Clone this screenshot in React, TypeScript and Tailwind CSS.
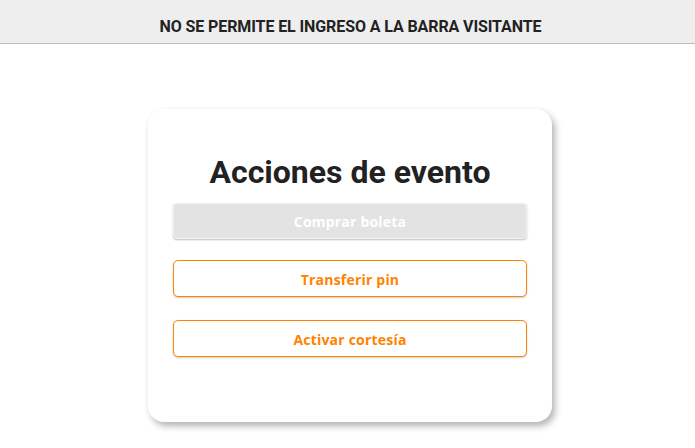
import React from 'react';

const actions = [
  { label: 'Comprar boleta', disabled: true },
  { label: 'Transferir pin', disabled: false },
  { label: 'Activar cortesía', disabled: false },
];

export default function App() {
  return (
    <div className="min-h-screen bg-white" style={{ fontFamily: 'Roboto, "Liberation Sans", sans-serif' }}>
      <header className="h-[44px] bg-[#eeeeee] border-b border-[#bdbdbd] flex items-end justify-center pl-[6px] pb-[4px]">
        <p className="text-[16px] font-bold uppercase text-[#222222] tracking-[-0.1px]">
          No se permite el ingreso a la barra visitante
        </p>
      </header>

      <main className="flex justify-center pl-[5px] pt-[65px]">
        <div className="w-[404px] rounded-[16px] bg-white shadow-[3px_4px_7px_rgba(0,0,0,0.3)] px-[25px] pt-[44px] pb-[65px]">
          <h1 className="text-center text-[32px] leading-[38px] font-bold text-[#222222]">
            Acciones de evento
          </h1>

          <div className="mt-[12px] flex flex-col">
            {actions.map((a, i) =>
              a.disabled ? (
                <button
                  key={a.label}
                  disabled
                  className="h-[36px] w-full rounded-[4px] border border-[#f2f2f2] bg-[#e3e3e3] shadow-[0_1px_2px_rgba(0,0,0,0.25)] text-white text-[14px] font-bold tracking-[0.2px]"
                  style={{ fontFamily: '"Open Sans", sans-serif' }}
                >
                  {a.label}
                </button>
              ) : (
                <button
                  key={a.label}
                  className={`h-[37px] w-full rounded-[5px] border border-[#ff8200] bg-white shadow-[0_1px_2px_rgba(0,0,0,0.2)] text-[#ff8200] text-[14px] font-bold tracking-[0.2px] pt-[1px] ${
                    i === 1 ? 'mt-[21px]' : 'mt-[23px]'
                  }`}
                  style={{ fontFamily: '"Open Sans", sans-serif' }}
                >
                  {a.label}
                </button>
              )
            )}
          </div>
        </div>
      </main>
    </div>
  );
}
